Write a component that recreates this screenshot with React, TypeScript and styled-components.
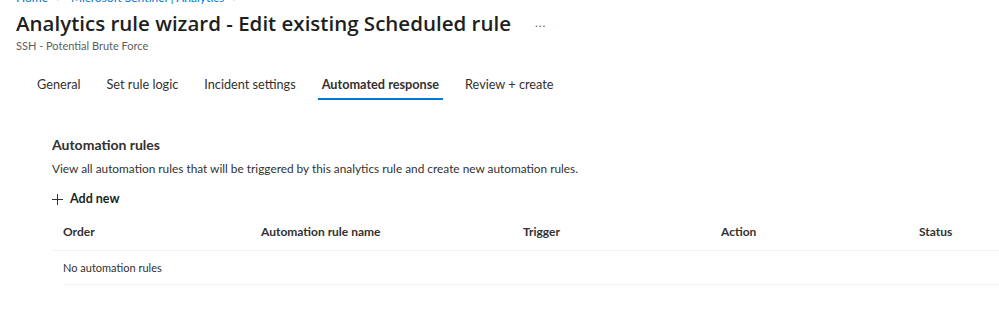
import React from 'react';
import styled, { createGlobalStyle } from 'styled-components';

const GlobalStyle = createGlobalStyle`
	html, body {
		margin: 0;
		padding: 0;
		background: #ffffff;
	}
	body {
		font-family: Lato, "Open Sans", sans-serif;
		color: #323130;
		overflow: hidden;
	}
`;

const Page = styled.div`
	width: 999px;
	height: 336px;
	overflow: hidden;
	padding-left: 16px;
	box-sizing: border-box;
`;

const Breadcrumb = styled.nav`
	display: flex;
	gap: 8px;
	margin-top: -9px;
	height: 13px;
	font-size: 12px;
	line-height: 14px;
`;

const Crumb = styled.span<{ $muted?: boolean }>`
	color: ${p => (p.$muted ? '#a19f9d' : '#0078d4')};
`;

const TitleRow = styled.div`
	display: flex;
	align-items: center;
	gap: 24px;
	margin-top: 5px;
`;

const Title = styled.h1`
	margin: 0;
	font-family: "Open Sans", "Noto Sans", sans-serif;
	font-size: 20.5px;
	font-weight: 600;
	line-height: 28px;
	color: #201f1e;
`;

const More = styled.span`
	font-size: 12px;
	color: #605e5c;
	letter-spacing: 1px;
	margin-top: -2px;
`;

const Subtitle = styled.div`
	margin-top: 2px;
	font-size: 11px;
	line-height: 14px;
	color: #605e5c;
`;

const Tabs = styled.div`
	display: flex;
	gap: 18px;
	margin-top: 17px;
	padding-left: 17px;
`;

const Tab = styled.div<{ $active?: boolean }>`
	padding: 4px 4px 0;
	height: 30px;
	box-sizing: border-box;
	font-size: 12.7px;
	line-height: 20px;
	font-weight: ${p => (p.$active ? 700 : 400)};
	color: #323130;
	border-bottom: 2px solid ${p => (p.$active ? '#0078d4' : 'transparent')};
`;

const Section = styled.section`
	padding-left: 36px;
	margin-top: 35px;
`;

const SectionTitle = styled.h2`
	margin: 0;
	font-size: 14px;
	font-weight: 700;
	line-height: 20px;
	color: #323130;
`;

const Description = styled.p`
	margin: 5px 0 0;
	font-size: 11.85px;
	line-height: 18px;
	color: #323130;
`;

const AddButton = styled.button`
	display: flex;
	align-items: center;
	gap: 7px;
	margin-top: 13px;
	padding: 0;
	border: none;
	background: none;
	font-family: inherit;
	font-size: 12.5px;
	font-weight: 700;
	color: #201f1e;
	line-height: 16px;
`;

const Table = styled.div`
	margin-top: 5px;
`;

const HeaderRow = styled.div`
	display: grid;
	grid-template-columns: 198px 262px 198px 198px 1fr;
	padding-left: 11px;
	height: 38px;
	align-items: center;
	border-bottom: 1px solid #f3f2f1;
`;

const HeaderCell = styled.div`
	font-size: 12px;
	font-weight: 700;
	color: #323130;
`;

const EmptyRow = styled.div`
	margin-left: 11px;
	height: 33px;
	display: flex;
	align-items: center;
	font-size: 11px;
	color: #323130;
	border-bottom: 1px solid #f3f2f1;
`;

const PlusIcon = () => (
	<svg width="11" height="11" viewBox="0 0 11 11">
		<path d="M5.5 0v11M0 5.5h11" stroke="#323130" strokeWidth="1" />
	</svg>
);

const tabs = ['General', 'Set rule logic', 'Incident settings', 'Automated response', 'Review + create'];
const columns = ['Order', 'Automation rule name', 'Trigger', 'Action', 'Status'];

const App = () => {
	return (
		<Page>
			<GlobalStyle />
			<Breadcrumb>
				<Crumb>Home</Crumb>
				<Crumb $muted>&gt;</Crumb>
				<Crumb>Microsoft Sentinel | Analytics</Crumb>
				<Crumb $muted>&gt;</Crumb>
			</Breadcrumb>
			<TitleRow>
				<Title>Analytics rule wizard - Edit existing Scheduled rule</Title>
				<More>...</More>
			</TitleRow>
			<Subtitle>SSH - Potential Brute Force</Subtitle>
			<Tabs>
				{tabs.map(t => (
					<Tab key={t} $active={t === 'Automated response'}>{t}</Tab>
				))}
			</Tabs>
			<Section>
				<SectionTitle>Automation rules</SectionTitle>
				<Description>
					View all automation rules that will be triggered by this analytics rule and create new automation rules.
				</Description>
				<AddButton>
					<PlusIcon />
					Add new
				</AddButton>
				<Table>
					<HeaderRow>
						{columns.map(c => (
							<HeaderCell key={c}>{c}</HeaderCell>
						))}
					</HeaderRow>
					<EmptyRow>No automation rules</EmptyRow>
				</Table>
			</Section>
		</Page>
	);
};

export default App;
